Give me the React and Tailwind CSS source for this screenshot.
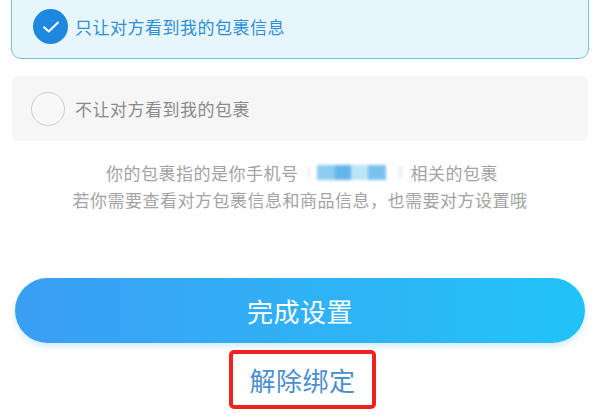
import React from "react";

export default function App() {
  const font = { fontFamily: '"Noto Sans CJK SC", "Noto Sans", sans-serif' };
  return (
    <div
      className="w-[600px] h-[420px] overflow-hidden bg-white flex flex-col"
      style={font}
    >
      {/* Option 1 - selected */}
      <div className="mx-[11px] -mt-[20px] pt-[28px] pb-[14px] pl-[21px] rounded-[10px] border-[1.5px] border-[#76c2d2] bg-[#e7f6fd] flex items-center">
        <div className="w-[35px] h-[35px] rounded-full bg-[#1e88e0] flex items-center justify-center shrink-0">
          <svg width="18" height="14" viewBox="0 0 18 14" fill="none">
            <path
              d="M2 7.2 L6.8 11.5 L16 2.5"
              stroke="white"
              strokeWidth="2"
              strokeLinecap="round"
              strokeLinejoin="round"
            />
          </svg>
        </div>
        <span className="ml-[7px] text-[17px] tracking-[0.5px] leading-none text-[#2c8fd6]">
          只让对方看到我的包裹信息
        </span>
      </div>

      {/* Option 2 */}
      <div className="mx-[12px] mt-[17px] h-[65px] pl-[19px] rounded-[6px] bg-[#f6f6f6] flex items-center">
        <div className="w-[34px] h-[34px] rounded-full border-[1.5px] border-[#cfcfcf] bg-[#f8f8f8] shrink-0" />
        <span className="ml-[10px] text-[17px] tracking-[0.5px] leading-none text-[#8a8a8a]">
          不让对方看到我的包裹
        </span>
      </div>

      {/* Info */}
      <div className="mt-[18px] flex flex-col items-center text-[17px] tracking-[0.5px] leading-[27px] text-[#a3a3a3]">
        <div className="flex items-center pl-[4px]">
          <span>你的包裹指的是你手机号</span>
          <span className="w-[112px] h-[27px] flex items-center justify-center">
            <span className="flex items-center h-[15px] blur-[1.5px]">
              <span className="w-[4px] h-[13px] bg-[#f0f4f7]" />
              <span className="w-[6px]" />
              <span className="w-[18px] h-[15px] bg-[#8ccdf0]" />
              <span className="w-[16px] h-[15px] bg-[#62b5e7]" />
              <span className="w-[17px] h-[15px] bg-[#bde3f6]" />
              <span className="w-[18px] h-[15px] bg-[#7ac2ed]" />
              <span className="w-[12px]" />
              <span className="w-[5px] h-[13px] bg-[#eef3f6]" />
            </span>
          </span>
          <span>相关的包裹</span>
        </div>
        <div>若你需要查看对方包裹信息和商品信息，也需要对方设置哦</div>
      </div>

      {/* Button */}
      <div className="mx-[15px] mt-[65px] h-[65px] shrink-0 rounded-full bg-gradient-to-r from-[#3a9ef2] to-[#20c3f9] shadow-[0_3px_6px_rgba(60,170,240,0.25)] flex items-center justify-center">
        <span className="text-[26px] leading-none text-white tracking-[0.5px]">
          完成设置
        </span>
      </div>

      {/* Unbind */}
      <div className="mt-[7px] flex justify-center pl-[5px]">
        <div className="w-[147px] h-[59px] border-[4px] border-[#ef2220] rounded-[5px] flex items-center justify-center">
          <span className="text-[26px] leading-none text-[#4b8fcc] tracking-[0.5px]">
            解除绑定
          </span>
        </div>
      </div>
    </div>
  );
}
